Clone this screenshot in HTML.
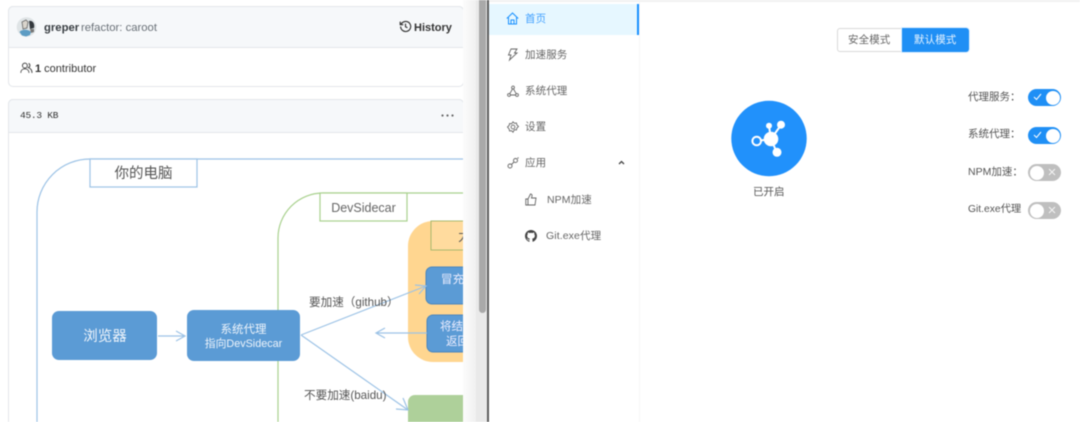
<!DOCTYPE html>
<html><head><meta charset="utf-8"><style>
html,body{margin:0;padding:0;background:#fff}
#r{position:relative;width:1080px;height:422px;overflow:hidden;background:#fff;font-family:"Liberation Sans","Noto Sans CJK SC",sans-serif;filter:blur(.45px)}
#r div,#r span.a{position:absolute;box-sizing:border-box}
.t{position:absolute;white-space:nowrap;line-height:16px;height:16px}
.m{font-size:10.5px;color:#666;letter-spacing:.1px}
.l{font-size:10.5px;color:#555}
.sw{left:1028px;width:33px;height:17px;border-radius:9px}
.on{background:#1f8ff5}.off{background:#bfbfbf}
.k{top:1.5px;width:14px;height:14px;border-radius:50%;background:#fff}
svg{position:absolute;overflow:visible}
</style></head><body><div id="r">

<!-- left -->
<div style="left:8px;top:6px;width:456px;height:81px;border:1px solid #e3e6ea;border-radius:5px;background:#fff"></div>
<div style="left:8px;top:6px;width:456px;height:42px;border:1px solid #e3e6ea;border-radius:5px 5px 0 0;background:#f6f8fa"></div>
<svg style="left:17px;top:17px" width="20" height="20" viewBox="0 0 20 20">
<circle cx="9.500" cy="10" r="9.800" fill="#dfe4e6"/><path d="M2.500 15c2-3 9-3 11.500 0l-1 3-4 1.500-4-1z" fill="#5c9cc4"/><path d="M5 5l4-2 2 2-1 6-4 1z" fill="#d9d4cc" stroke="#666" stroke-width=".8"/><path d="M12 4c4-1 6 3 5 7l-4 1z" fill="#33383d"/><path d="M13 12l4 0 0 3-3 1z" fill="#777"/>
</svg>
<span class="t" style="left:44px;top:20px;font-size:11.300px;font-weight:bold;color:#3a3f44">greper</span>
<span class="t" style="left:81px;top:20px;font-size:11.300px;color:#6a7178">refactor: caroot</span>
<svg style="left:399px;top:20px" width="13" height="13" viewBox="0 0 16 16" fill="none" stroke="#333" stroke-width="1.400"><path d="M2 8a6.200 6.200 0 1 0 1.600-4.200L1.500 5.800M1.500 2v3.800h3.800"/><path d="M8 4.500V8.300l2.400 1.300"/></svg>
<span class="t" style="left:414px;top:20px;font-size:11px;font-weight:bold;color:#333">History</span>
<svg style="left:20px;top:62px" width="13" height="12" viewBox="0 0 16 14" fill="none" stroke="#444" stroke-width="1.200"><circle cx="6" cy="4" r="3"/><path d="M1 13c0-3 2-5 5-5s5 2 5 5M10.500 1.500c2 .5 2.500 4-.2 5 2.500 1 4.500 3 4.500 6.500"/></svg>
<span class="t" style="left:35px;top:61px;font-size:11px;color:#333"><b>1</b> contributor</span>
<div style="left:8px;top:99px;width:456px;height:340px;border:1px solid #e3e6ea;border-radius:5px;background:#fff"></div>
<div style="left:8px;top:99px;width:456px;height:34px;border:1px solid #e3e6ea;border-radius:5px 5px 0 0;background:#f6f8fa"></div>
<span class="t" style="left:20px;top:108px;font-size:9.500px;letter-spacing:-.25px;font-family:'Liberation Mono',monospace;color:#333">45.3 KB</span>
<svg style="left:441px;top:114px" width="13" height="3"><circle cx="1.500" cy="1.500" r="1.100" fill="#666"/><circle cx="6.500" cy="1.500" r="1.100" fill="#666"/><circle cx="11.500" cy="1.500" r="1.100" fill="#666"/></svg>

<!-- diagram -->
<svg style="left:0;top:0" width="464" height="422" viewBox="0 0 464 422" font-family="'Liberation Sans','Noto Sans CJK SC',sans-serif">
<path d="M37 422V212a53 53 0 0 1 53-53H464" fill="none" stroke="#9dc3e6" stroke-width="1.200"/>
<rect x="90" y="159" width="107" height="28" fill="#fff" stroke="#9dc3e6" stroke-width="1.200"/>
<text x="143.500" y="178" font-size="14.500" text-anchor="middle" fill="#555">你的电脑</text>
<path d="M278 422V238a45 45 0 0 1 45-45H464" fill="none" stroke="#a9d18e" stroke-width="1.200"/>
<rect x="320" y="193" width="87" height="28" fill="#fff" stroke="#a9d18e" stroke-width="1.200"/>
<text x="363.500" y="212" font-size="12.500" text-anchor="middle" fill="#666">DevSidecar</text>
<path d="M464 221H433a25 25 0 0 0-25 25V337a25 25 0 0 0 25 25H464z" fill="#ffd690"/>
<rect x="431" y="221" width="40" height="29" fill="#ffdb9e" stroke="#a9b96e" stroke-width="1"/>
<text x="458" y="241" font-size="13" fill="#555">力</text>
<rect x="426" y="267" width="50" height="37" rx="6" fill="#5b9bd5" stroke="#4a86bd"/>
<text x="441" y="283" font-size="11.500" fill="#eef">冒充</text>
<rect x="427" y="315" width="50" height="37" rx="6" fill="#5b9bd5" stroke="#4a86bd"/>
<text x="440" y="330" font-size="11.500" fill="#eef">将结</text>
<text x="446" y="345" font-size="11.500" fill="#eef">返回</text>
<path d="M408 422V402a7 7 0 0 1 7-7H464V422z" fill="#aed09a"/>
<rect x="52" y="311" width="105" height="49" rx="7" fill="#5b9bd5"/>
<text x="105" y="341" font-size="14.500" text-anchor="middle" fill="#eef4fb">浏览器</text>
<rect x="187" y="310" width="113" height="51" rx="7" fill="#5b9bd5"/>
<text x="243.500" y="333" font-size="11.500" text-anchor="middle" fill="#eef4fb">系统代理</text>
<text x="243.500" y="347" font-size="10.800" text-anchor="middle" fill="#eef4fb">指向DevSidecar</text>
<g fill="none" stroke="#9dc3e6" stroke-width="1.200">
<path d="M158 336H185M176 331l9 5-9 5"/>
<path d="M301 335L426 286M415 285l11 1-7 8"/>
<path d="M301 335L408 410M403 398l5 12-12-1"/>
<path d="M427 333H376M385 328l-9 5 9 5"/>
</g>
<text x="309" y="306" font-size="11.600" fill="#555">要加速（github）</text>
<text x="304" y="399" font-size="11.600" fill="#555">不要加速(baidu)</text>
</svg>

<!-- scrollbar -->
<div style="left:463px;top:0;width:13px;height:422px;background:linear-gradient(90deg,#fcfcfc,#f0f0f0)"></div>
<div style="left:476px;top:0;width:11px;height:422px;background:#e9e9e9"></div>
<div style="left:479px;top:0;width:7px;height:313px;background:#a9a9a9;border-radius:0 0 4px 4px"></div>
<div style="left:487px;top:0;width:1.500px;height:422px;background:#5c5c5c"></div>

<!-- right -->
<div style="left:489px;top:0;width:591px;height:2px;background:#f2f2f2"></div>
<div style="left:639px;top:2px;width:1px;height:420px;background:#f6f6f6"></div>
<div style="left:489px;top:4px;width:150px;height:31px;background:#e6f7ff"></div>
<div style="left:637px;top:4px;width:2px;height:31px;background:#1890ff"></div>

<svg style="left:506px;top:12px" width="13" height="13" viewBox="0 0 13 13" fill="none" stroke="#1890ff" stroke-width="1"><path d="M.8 6.500L6.500 1l5.700 5.500M2.500 5.500V12h8V5.500M5 12V8h3v4"/></svg>
<span class="t m" style="left:525px;top:11px;color:#40a0ff">首页</span>
<svg style="left:507px;top:48px" width="11" height="13" viewBox="0 0 11 13" fill="none" stroke="#666" stroke-width=".9"><path d="M4 1h6L7.500 5H10L2.500 12 4 7H1.500z"/></svg>
<span class="t m" style="left:525px;top:47px">加速服务</span>
<svg style="left:507px;top:85px" width="12" height="12" viewBox="0 0 12 12" fill="none" stroke="#666" stroke-width=".9"><circle cx="6" cy="2.500" r="1.400"/><circle cx="2" cy="10" r="1.400"/><circle cx="10" cy="10" r="1.400"/><path d="M5.500 4L2.800 8.700M6.500 4l2.700 4.700M3.500 10h5"/></svg>
<span class="t m" style="left:525px;top:83px">系统代理</span>
<svg style="left:507px;top:121px" width="12" height="12" viewBox="0 0 12 12" fill="none" stroke="#666" stroke-width=".9"><path d="M6 .8l1.400 1.500 2-.3.500 2 1.600 1.500-1.600 1.500-.5 2-2-.300L6 11.200 4.600 9.700l-2 .3-.5-2L.5 6l1.600-1.500.5-2 2 .3z"/><circle cx="6" cy="6" r="1.900"/></svg>
<span class="t m" style="left:525px;top:119px">设置</span>
<svg style="left:507px;top:157px" width="12" height="12" viewBox="0 0 12 12" fill="none" stroke="#666" stroke-width=".9"><circle cx="3" cy="9" r="2"/><circle cx="8.500" cy="3.500" r="2"/><path d="M4.500 7.500l2.500-2.500M10.500 1.500l1-1"/></svg>
<span class="t m" style="left:525px;top:155px">应用</span>
<svg style="left:618px;top:160px" width="7" height="5" viewBox="0 0 7 5" fill="none" stroke="#444" stroke-width="1.300"><path d="M1 4l2.500-2.500L6 4"/></svg>
<svg style="left:525px;top:193px" width="12" height="13" viewBox="0 0 12 13" fill="none" stroke="#666" stroke-width=".9"><path d="M.8 6H3v6H.8zM3 6l2.500-5c1.300 0 1.800 1 1.500 2L6.500 5H11l-1 7H3"/></svg>
<span class="t m" style="left:547px;top:192px">NPM加速</span>
<svg style="left:525px;top:230px" width="12" height="12" viewBox="0 0 16 16"><path fill="#444" d="M8 0C3.580 0 0 3.580 0 8c0 3.540 2.290 6.530 5.470 7.590.4.070.55-.170.55-.38 0-.190-.010-.820-.010-1.490-2.010.370-2.530-.490-2.690-.940-.090-.230-.480-.940-.820-1.130-.280-.150-.680-.520-.010-.530.630-.010 1.080.580 1.230.820.720 1.210 1.870.870 2.330.660.070-.520.280-.870.510-1.070-1.780-.200-3.640-.890-3.640-3.950 0-.870.310-1.590.820-2.150-.080-.200-.360-1.020.080-2.120 0 0 .670-.210 2.200.820.640-.180 1.320-.270 2-.270s1.360.090 2 .270c1.530-1.040 2.200-.820 2.200-.820.440 1.100.160 1.920.080 2.120.510.560.820 1.270.820 2.150 0 3.070-1.870 3.750-3.650 3.950.290.250.540.730.540 1.480 0 1.070-.010 1.930-.010 2.200 0 .210.150.460.550.380A8.010 8.010 0 0 0 16 8c0-4.420-3.580-8-8-8z"/></svg>
<span class="t m" style="left:546px;top:228px">Git.exe代理</span>

<!-- segment -->
<div style="left:837px;top:28px;width:66px;height:24px;border:1px solid #d9d9d9;border-radius:3px 0 0 3px;background:#fff"></div>
<div style="left:902px;top:28px;width:67px;height:24px;background:#1f8ff5;border-radius:0 3px 3px 0;box-shadow:0 0 0 1px #e3f2ff"></div>
<span class="t" style="left:848px;top:32px;font-size:10.500px;color:#666;letter-spacing:.1px">安全模式</span>
<span class="t" style="left:914px;top:32px;font-size:10.500px;color:#e8f4ff;letter-spacing:.1px">默认模式</span>

<!-- status -->
<svg style="left:731px;top:101px" width="76" height="76" viewBox="731 101 76 76">
<circle cx="769" cy="138.500" r="37.700" fill="#2191fb"/>
<g stroke="#fff" stroke-width="2" fill="#fff"><path d="M771 139L769 126M771 139L781 125M771 139L777 153M771 139L757 141"/>
<circle cx="771" cy="139" r="7.300" stroke="none"/><circle cx="769" cy="125.700" r="3" stroke="none"/><circle cx="781" cy="124.700" r="4" stroke="none"/><circle cx="777" cy="152.300" r="4.500" stroke="none"/>
<circle cx="756.700" cy="141" r="4.300" fill="#2191fb" stroke-width="2"/></g>
</svg>
<span class="t" style="left:753px;top:184px;font-size:10.500px;color:#555">已开启</span>

<!-- switches -->
<span class="t l" style="left:968px;top:89px">代理服务：</span>
<span class="t l" style="left:968px;top:126px">系统代理：</span>
<span class="t l" style="left:968px;top:164px">NPM加速：</span>
<span class="t l" style="left:968px;top:202px;font-size:10.300px">Git.exe代理</span>

<div class="sw on" style="top:89px"><div class="k" style="left:17.500px"></div>
<svg style="left:5px;top:4px" width="9" height="8" fill="none" stroke="#fff" stroke-width="1"><path d="M1 4l2.500 2.500L8 1"/></svg></div>
<div class="sw on" style="top:127px"><div class="k" style="left:17.500px"></div>
<svg style="left:5px;top:4px" width="9" height="8" fill="none" stroke="#fff" stroke-width="1"><path d="M1 4l2.500 2.500L8 1"/></svg></div>
<div class="sw off" style="top:164px"><div class="k" style="left:1.500px"></div>
<svg style="left:20px;top:4px" width="8" height="8" fill="none" stroke="#f4f4f4" stroke-width="1"><path d="M1 1l6 6M7 1l-6 6"/></svg></div>
<div class="sw off" style="top:202px"><div class="k" style="left:1.500px"></div>
<svg style="left:20px;top:4px" width="8" height="8" fill="none" stroke="#f4f4f4" stroke-width="1"><path d="M1 1l6 6M7 1l-6 6"/></svg></div>

</div></body></html>
